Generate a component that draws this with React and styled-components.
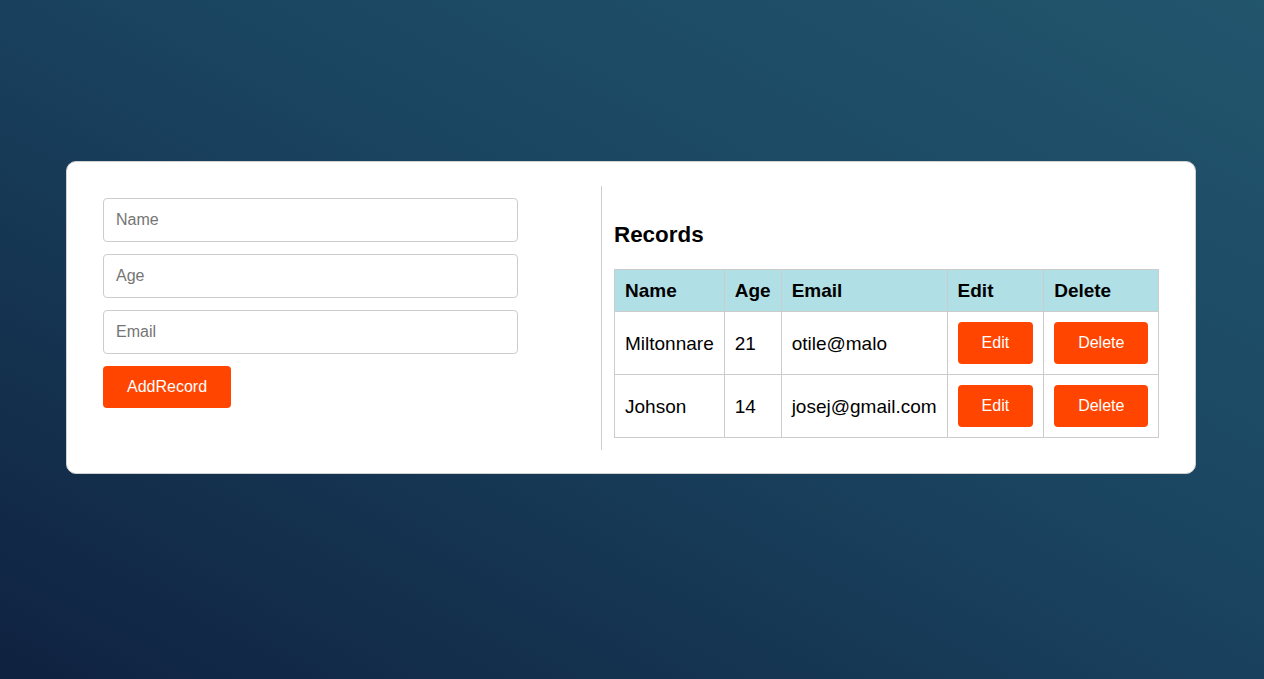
import React from "react";
import styled, { createGlobalStyle } from "styled-components";

const Global = createGlobalStyle`
  html, body { margin: 0; padding: 0; height: 100%; }
  body {
    font-family: "Liberation Sans", Arial, sans-serif;
    background: linear-gradient(to top right, #0f2240 0%, #1a4460 55%, #22566d 100%);
    min-height: 679px;
  }
`;

const Page = styled.div`
  min-height: 679px;
  box-sizing: border-box;
  padding: 161px 0 0 66px;
  display: flex;
  align-items: flex-start;
`;

const Card = styled.div`
  width: 1130px;
  box-sizing: border-box;
  background: #fff;
  border: 1px solid #d0d0d0;
  border-radius: 10px;
  padding: 24px 24px 23px;
  display: grid;
  grid-template-columns: 511px 1fr;
`;

const FormCol = styled.div`
  padding: 12px;
  display: flex;
  flex-direction: column;
  gap: 12px;
  border-right: 1px solid #ccc;
`;

const Input = styled.input`
  width: 415px;
  height: 44px;
  box-sizing: border-box;
  padding: 12px;
  font-size: 16px;
  font-family: "Liberation Sans", Arial, sans-serif;
  border: 1px solid #ccc;
  border-radius: 4px;
  outline: none;
  &::placeholder { color: #757575; }
`;

const Button = styled.button`
  align-self: ${(p) => (p.$start ? "flex-start" : "auto")};
  background: #ff4500;
  color: #fff;
  border: none;
  border-radius: 4px;
  padding: 12px 24px;
  height: 42px;
  font-size: 16px;
  font-family: "Liberation Sans", Arial, sans-serif;
  line-height: 18px;
  cursor: pointer;
`;

const ListCol = styled.div`
  padding: 12px;
`;

const Title = styled.h2`
  font-size: 22.4px;
  font-weight: bold;
  margin: 24px 0 22px;
  line-height: 25px;
  color: #000;
`;

const Table = styled.table`
  border-collapse: collapse;
  font-size: 19px;
  color: #000;
`;

const Th = styled.th`
  background: #b0dfe5;
  text-align: left;
  font-weight: bold;
  padding: 10px;
  border: 1px solid #ccc;
  line-height: 21px;
`;

const Td = styled.td`
  padding: 10px;
  border: 1px solid #ccc;
  line-height: 21px;
`;

const rows = [
  { name: "Miltonnare", age: 21, email: "otile@malo" },
  { name: "Johson", age: 14, email: "josej@gmail.com" },
];

export default function App() {
  return (
    <>
      <Global />
      <Page>
        <Card>
          <FormCol>
            <Input placeholder="Name" />
            <Input placeholder="Age" />
            <Input placeholder="Email" />
            <Button $start>AddRecord</Button>
          </FormCol>
          <ListCol>
            <Title>Records</Title>
            <Table>
              <thead>
                <tr>
                  <Th>Name</Th>
                  <Th>Age</Th>
                  <Th>Email</Th>
                  <Th>Edit</Th>
                  <Th>Delete</Th>
                </tr>
              </thead>
              <tbody>
                {rows.map((r) => (
                  <tr key={r.name}>
                    <Td>{r.name}</Td>
                    <Td>{r.age}</Td>
                    <Td>{r.email}</Td>
                    <Td><Button>Edit</Button></Td>
                    <Td><Button>Delete</Button></Td>
                  </tr>
                ))}
              </tbody>
            </Table>
          </ListCol>
        </Card>
      </Page>
    </>
  );
}
